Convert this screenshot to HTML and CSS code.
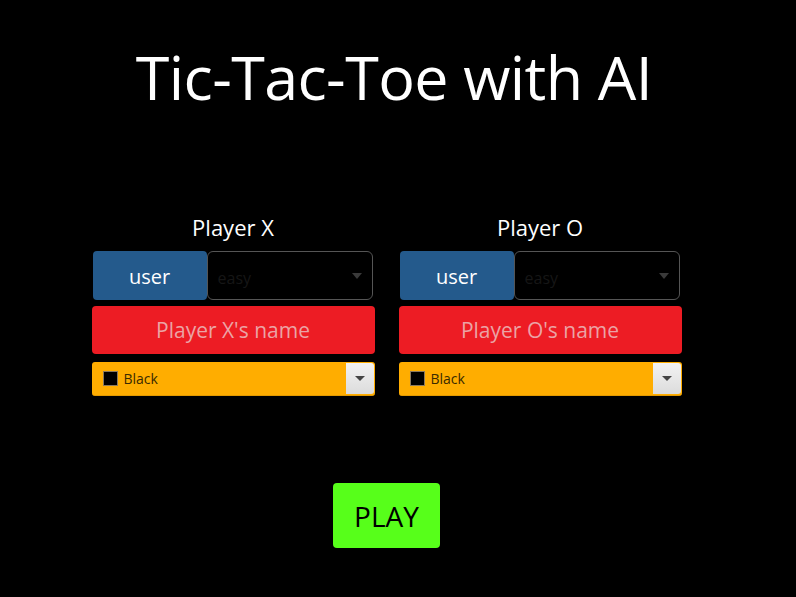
FILE: index.html
```html
<!DOCTYPE html>
<html>
<head>
<meta charset="utf-8">
<link rel="stylesheet" href="styles.css">
</head>
<body>
<div class="page">
  <h1 class="title">Tic-Tac-Toe with AI</h1>
  <div class="players">
    <div class="player">
      <div class="label">Player X</div>
      <div class="mode-row">
        <button class="user-btn">user</button>
        <div class="level">
          <span class="level-text">easy</span>
          <span class="level-arrow"></span>
        </div>
      </div>
      <div class="name-input">Player X's name</div>
      <div class="color-select">
        <span class="swatch"></span>
        <span class="color-text">Black</span>
        <span class="color-btn"><span class="color-arrow"></span></span>
      </div>
    </div>
    <div class="player">
      <div class="label">Player O</div>
      <div class="mode-row">
        <button class="user-btn">user</button>
        <div class="level">
          <span class="level-text">easy</span>
          <span class="level-arrow"></span>
        </div>
      </div>
      <div class="name-input">Player O's name</div>
      <div class="color-select">
        <span class="swatch"></span>
        <span class="color-text">Black</span>
        <span class="color-btn"><span class="color-arrow"></span></span>
      </div>
    </div>
  </div>
  <div class="play-wrap">
    <button class="play">PLAY</button>
  </div>
</div>
</body>
</html>
```

FILE: styles.css
```css
html, body {
  margin: 0;
  padding: 0;
  background: #000;
  height: 100%;
  overflow: hidden;
}
body {
  font-family: "Open Sans", "Noto Sans", sans-serif;
  color: #fff;
}
.page {
  width: 773px;
}
.title {
  margin: 0;
  padding: 32px 0 0 15px;
  text-align: center;
  font-weight: 400;
  font-size: 61px;
  line-height: 90px;
  letter-spacing: -0.6px;
}
.players {
  display: flex;
  justify-content: center;
  gap: 24px;
  margin-top: 91px;
}
.player {
  width: 283px;
  display: flex;
  flex-direction: column;
}
.label {
  text-align: center;
  font-size: 22px;
  line-height: 28px;
  margin-bottom: 10px;
}
.mode-row {
  display: flex;
  height: 49px;
}
.user-btn {
  width: 114px;
  margin-left: 1px;
  height: 49px;
  border: 0;
  border-radius: 4px;
  background: #245a8c;
  color: #fff;
  font-family: inherit;
  font-size: 20px;
  padding: 2px 0 0;
}
.level {
  flex: 1;
  margin-right: 2px;
  height: 47px;
  border: 1px solid #555;
  border-radius: 6px;
  background: #000;
  display: flex;
  align-items: center;
  justify-content: space-between;
  padding: 0 10px;
}
.level-text {
  color: #161616;
  font-size: 16px;
  margin-top: 4px;
}
.level-arrow {
  width: 0;
  height: 0;
  border-left: 5px solid transparent;
  border-right: 5px solid transparent;
  border-top: 6px solid #3a3a3a;
}
.name-input {
  margin-top: 6px;
  height: 48px;
  border-radius: 4px;
  background: #ed1c24;
  color: #eba3a5;
  font-size: 21px;
  display: flex;
  align-items: center;
  justify-content: center;
}
.color-select {
  margin-top: 8px;
  height: 34px;
  border-radius: 3px;
  background: #ffad00;
  display: flex;
  align-items: center;
  box-sizing: border-box;
  border-bottom: 1px solid #e49a00;
}
.swatch {
  width: 13px;
  height: 13px;
  background: #000;
  border: 1px solid #8a7a60;
  margin-left: 11px;
}
.color-text {
  color: #3a2a00;
  font-size: 14px;
  margin-left: 6px;
  flex: 1;
}
.color-btn {
  width: 28px;
  height: 31px;
  margin-right: 1px;
  background: linear-gradient(#f2f2f2, #dcdcdc);
  border-radius: 0 3px 3px 0;
  display: flex;
  align-items: center;
  justify-content: center;
}
.color-arrow {
  width: 0;
  height: 0;
  border-left: 5px solid transparent;
  border-right: 5px solid transparent;
  border-top: 5px solid #444;
}
.play-wrap {
  display: flex;
  justify-content: center;
  margin-top: 87px;
}
.play {
  width: 107px;
  height: 65px;
  border: 0;
  border-radius: 4px;
  background: #57ff1a;
  color: #000;
  font-family: inherit;
  font-size: 28px;
  padding: 0;
}
```
